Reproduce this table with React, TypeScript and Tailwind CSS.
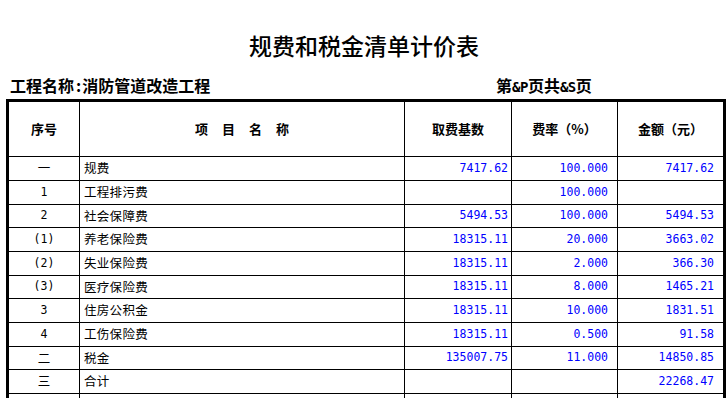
import React from "react";

const cjk = "font-['Noto_Sans_CJK_SC','Noto_Sans',sans-serif]";
const mono = "font-['DejaVu_Sans_Mono','Liberation_Mono',monospace]";

type Row = {
  seq: string;
  seqCjk?: boolean;
  name: string;
  base: string;
  rate: string;
  amount: string;
  h: string;
};

const rows: Row[] = [
  { seq: "一", seqCjk: true, name: "规费", base: "7417.62", rate: "100.000", amount: "7417.62", h: "h-[24px]" },
  { seq: "1", name: "工程排污费", base: "", rate: "100.000", amount: "", h: "h-[24px]" },
  { seq: "2", name: "社会保障费", base: "5494.53", rate: "100.000", amount: "5494.53", h: "h-[23px]" },
  { seq: "(1)", name: "养老保险费", base: "18315.11", rate: "20.000", amount: "3663.02", h: "h-[24px]" },
  { seq: "(2)", name: "失业保险费", base: "18315.11", rate: "2.000", amount: "366.30", h: "h-[24px]" },
  { seq: "(3)", name: "医疗保险费", base: "18315.11", rate: "8.000", amount: "1465.21", h: "h-[23px]" },
  { seq: "3", name: "住房公积金", base: "18315.11", rate: "10.000", amount: "1831.51", h: "h-[24px]" },
  { seq: "4", name: "工伤保险费", base: "18315.11", rate: "0.500", amount: "91.58", h: "h-[24px]" },
  { seq: "二", seqCjk: true, name: "税金", base: "135007.75", rate: "11.000", amount: "14850.85", h: "h-[23px]" },
  { seq: "三", seqCjk: true, name: "合计", base: "", rate: "", amount: "22268.47", h: "h-[24px]" },
  { seq: "", name: "", base: "", rate: "", amount: "", h: "h-[24px]" },
];

export default function App() {
  return (
    <div className={`w-[728px] h-[398px] overflow-hidden bg-white text-black ${cjk}`}>
      <div className="pt-[34px] text-center text-[23px] font-medium leading-[23px]">规费和税金清单计价表</div>
      <div className="mt-[20px] flex h-[16px] pl-[10px] text-[16px] font-bold leading-[16px]">
        <span className="w-[486px]">
          工程名称<span className="pl-[2px] pr-[1px]">:</span>消防管道改造工程
        </span>
        <span className="flex items-baseline">
          第<span className={`${mono} text-[14px] tracking-[-0.5px]`}>&amp;P</span>页共
          <span className={`${mono} text-[14px] tracking-[-0.5px]`}>&amp;S</span>页
        </span>
      </div>
      <div className="mt-[6px] ml-[6px] w-[720px] border-[3px] border-b-0 border-black">
        <div className="flex h-[55px] border-b border-black text-[13px] font-bold">
          <div className="flex w-[71px] items-center justify-center border-r border-black">序号</div>
          <div className="flex w-[325px] items-center justify-center gap-[14px] border-r border-black">
            <span>项</span>
            <span>目</span>
            <span>名</span>
            <span>称</span>
          </div>
          <div className="flex w-[107px] items-center justify-center border-r border-black">取费基数</div>
          <div className="flex w-[106px] items-center justify-center border-r border-black">费率（%）</div>
          <div className="flex w-[105px] items-center justify-center">金额（元）</div>
        </div>
        {rows.map((r, i) => (
          <div key={i} className={`flex ${r.h} border-b border-black`}>
            <div
              className={`flex w-[71px] items-center justify-center border-r border-black ${
                r.seqCjk ? "text-[12.5px]" : `${mono} text-[11.5px]`
              }`}
            >
              {r.seq}
            </div>
            <div className="flex w-[325px] items-center border-r border-black pl-[4px] text-[12.5px] tracking-[0.3px]">
              {r.name}
            </div>
            <div
              className={`flex w-[107px] items-center justify-end border-r border-black pr-[3px] text-[11.5px] text-[#0000ff] ${mono}`}
            >
              {r.base}
            </div>
            <div
              className={`flex w-[106px] items-center justify-end border-r border-black pr-[9px] text-[11.5px] text-[#0000ff] ${mono}`}
            >
              {r.rate}
            </div>
            <div
              className={`flex w-[105px] items-center justify-end pr-[9px] text-[11.5px] text-[#0000ff] ${mono}`}
            >
              {r.amount}
            </div>
          </div>
        ))}
      </div>
    </div>
  );
}
